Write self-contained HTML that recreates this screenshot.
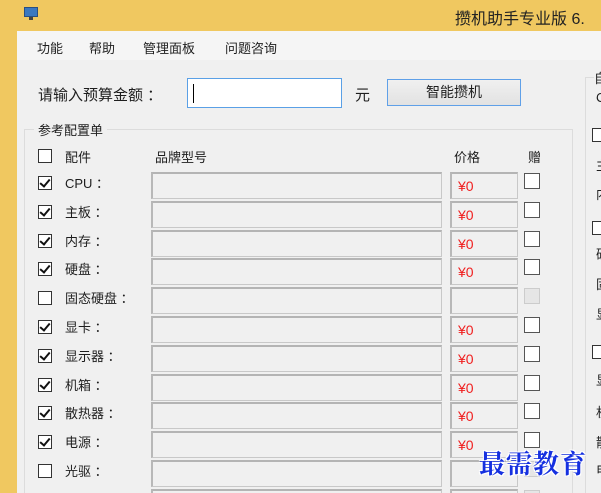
<!DOCTYPE html>
<html style="width:601px;height:493px;overflow:hidden"><head><meta charset="utf-8"><style>
*{margin:0;padding:0;box-sizing:border-box}
body{width:601px;height:493px;overflow:hidden;background:#f0c860;font-family:"Liberation Sans","Noto Sans CJK SC",sans-serif;font-size:13px;color:#1e1e1e;position:relative}
.a{position:absolute;white-space:nowrap}
.cb{position:absolute;width:14px;height:14px;border:1px solid #333;background:#fff}
.cb.dis{border-color:#ccc;background:#e6e6e6}
.ck::after{content:"";position:absolute;left:3px;top:0px;width:4px;height:8px;border:solid #111;border-width:0 2px 2px 0;transform:rotate(40deg)}
.fld{position:absolute;height:27px;border:1px solid #c8c8c8;border-top:2px solid #b4b4b4;border-left:2px solid #b8b8b8;background:#f0f0f0}
.pr{color:#f02020;font-size:14px;padding:4px 0 0 6px}
</style></head><body>
<div class="a" style="left:17px;top:31px;width:584px;height:462px;background:#f0f0f0"></div>
<div class="a" style="left:17px;top:31px;width:584px;height:29px;background:#f5f5f5"></div>
<div class="a" style="left:24px;top:7px;width:14px;height:10px;background:#3a78c0;border:1px solid #2a4f80"></div>
<div class="a" style="left:29px;top:17px;width:4px;height:3px;background:#444"></div>
<div class="a" style="left:455px;top:5px;font-size:16px;color:#222">攒机助手专业版 6.</div>
<div class="a" style="left:37px;top:38px">功能</div>
<div class="a" style="left:89px;top:38px">帮助</div>
<div class="a" style="left:143px;top:38px">管理面板</div>
<div class="a" style="left:225px;top:38px">问题咨询</div>
<div class="a" style="left:38px;top:84px;font-size:15px">请输入预算金额 ：</div>
<div class="a" style="left:187px;top:78px;width:155px;height:30px;background:#fff;border:1px solid #5aa0e6"></div>
<div class="a" style="left:193px;top:84px;width:1px;height:19px;background:#000"></div>
<div class="a" style="left:355px;top:84px;font-size:15px">元</div>
<div class="a" style="left:387px;top:79px;width:134px;height:27px;border:1px solid #5fa0e8;background:linear-gradient(#f0f0f0,#e2e2e2);text-align:center;line-height:25px;font-size:14px">智能攒机</div>
<div class="a" style="left:24px;top:129px;width:549px;height:380px;border:1px solid #dcdcdc"></div>
<div class="a" style="left:34px;top:120px;background:#f0f0f0;padding:0 4px">参考配置单</div>
<div class="cb" style="left:38px;top:149px"></div>
<div class="a" style="left:65px;top:147px">配件</div>
<div class="a" style="left:155px;top:147px">品牌型号</div>
<div class="a" style="left:454px;top:147px">价格</div>
<div class="a" style="left:528px;top:147px">赠</div>
<div class="a" style="left:585px;top:77px;width:30px;height:420px;border:1px solid #dcdcdc"></div>
<div class="a" style="left:594px;top:68px;background:#f0f0f0">自</div>
<div class="a" style="left:596px;top:90px">C</div>
<div class="cb" style="left:592px;top:128px"></div>
<div class="a" style="left:596px;top:155px">主</div>
<div class="a" style="left:596px;top:184px">内</div>
<div class="cb" style="left:592px;top:221px"></div>
<div class="a" style="left:596px;top:244px">硬</div>
<div class="a" style="left:596px;top:274px">固</div>
<div class="a" style="left:596px;top:304px">显</div>
<div class="cb" style="left:592px;top:345px"></div>
<div class="a" style="left:596px;top:370px">显</div>
<div class="a" style="left:596px;top:402px">机</div>
<div class="a" style="left:596px;top:432px">散</div>
<div class="a" style="left:596px;top:460px">电</div>
<div id="rows"></div>
<script>
var r=[["CPU ：",1,1],["主板 ：",1,1],["内存 ：",1,1],["硬盘 ：",1,1],["固态硬盘 ：",0,0],["显卡 ：",1,1],["显示器 ：",1,1],["机箱 ：",1,1],["散热器 ：",1,1],["电源 ：",1,1],["光驱 ：",0,0],["键盘 ：",0,0]];
var h="";
for(var i=0;i<r.length;i++){var t=172+i*28.8;
h+='<div class="cb'+(r[i][1]?' ck':'')+'" style="left:38px;top:'+(t+4)+'px"></div>';
h+='<div class="a" style="left:65px;top:'+(t+1)+'px">'+r[i][0]+'</div>';
h+='<div class="fld" style="left:151px;top:'+t+'px;width:291px"></div>';
h+='<div class="fld pr" style="left:450px;top:'+t+'px;width:68px">'+(r[i][2]?'¥0':'')+'</div>';
h+='<div class="cb'+(r[i][2]?'':' dis')+'" style="left:524px;top:'+(t+1)+'px;width:16px;height:16px'+(r[i][2]?';border-color:#555':'')+'"></div>';}
document.getElementById("rows").innerHTML=h;
</script>
<div class="a" style="left:479px;top:444px;font-family:'Noto Serif CJK SC',serif;font-weight:bold;font-size:26px;color:#1530e0;letter-spacing:1px;text-shadow:1px 1px 0 #fff,-1px -1px 0 #fff,1px -1px 0 #fff,-1px 1px 0 #fff">最需教育</div>
</body></html>
